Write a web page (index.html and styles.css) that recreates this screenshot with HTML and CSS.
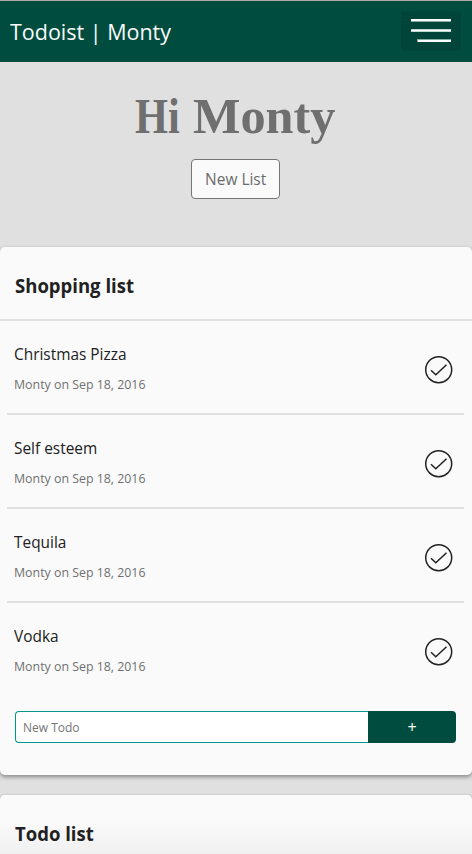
FILE: index.html
```html
<!DOCTYPE html>
<html lang="en">
<head>
<meta charset="utf-8">
<title>Todoist | Monty</title>
<link rel="stylesheet" href="styles.css">
</head>
<body>
<header class="navbar">
  <a class="brand"><span>Todoist | Monty</span></a>
  <button class="menu" aria-label="Menu">
    <svg width="60" height="40" viewBox="0 0 60 40"><path class="glow" d="M10 8h40v3H10zM10 18h40v3H10zM16 28h34v3H16z"/><path d="M10 8h40v2H10zM10 18.500h40v2H10zM17 29h33v2H17z"/></svg>
  </button>
</header>
<main>
  <section class="hero">
    <h1><span class="hi">Hi</span> <span class="user">Monty</span></h1>
    <button class="new-list"><span>New List</span></button>
  </section>
  <section class="card">
    <h2><span>Shopping list</span></h2>
    <ul>
      <li><div><p class="name"><span>Christmas Pizza</span></p><p class="meta"><span>Monty on Sep 18, 2016</span></p></div><svg class="check" viewBox="0 0 28 28"><circle cx="13.700" cy="13.700" r="13"/><path d="M6 14.200l4.800 4.500L21.500 8.700"/></svg></li>
      <li><div><p class="name"><span>Self esteem</span></p><p class="meta"><span>Monty on Sep 18, 2016</span></p></div><svg class="check" viewBox="0 0 28 28"><circle cx="13.700" cy="13.700" r="13"/><path d="M6 14.200l4.800 4.500L21.500 8.700"/></svg></li>
      <li><div><p class="name"><span>Tequila</span></p><p class="meta"><span>Monty on Sep 18, 2016</span></p></div><svg class="check" viewBox="0 0 28 28"><circle cx="13.700" cy="13.700" r="13"/><path d="M6 14.200l4.800 4.500L21.500 8.700"/></svg></li>
      <li><div><p class="name"><span>Vodka</span></p><p class="meta"><span>Monty on Sep 18, 2016</span></p></div><svg class="check" viewBox="0 0 28 28"><circle cx="13.700" cy="13.700" r="13"/><path d="M6 14.200l4.800 4.500L21.500 8.700"/></svg></li>
    </ul>
    <form class="add">
      <input type="text" placeholder="New Todo" aria-label="New Todo">
      <button type="button">+</button>
    </form>
  </section>
  <section class="card next">
    <h2><span>Todo list</span></h2>
  </section>
</main>
</body>
</html>
```
FILE: styles.css
```css
* { box-sizing: border-box; }
html, body { height: 854px; overflow: hidden; }
body { margin: 0; background: #e0e0e0; color: #212121; font-family: "Open Sans", "Noto Sans", sans-serif; }
h1, h2, p, ul { margin: 0; padding: 0; font-weight: normal; }
button, input { font-family: inherit; margin: 0; }
span { display: inline-block; white-space: nowrap; transform-origin: left center; }
.navbar { height: 62px; background: #004d40; border-top: 1px solid #aaa; display: flex; justify-content: space-between; align-items: flex-start; padding: 10px 11px 0 10px; }
.brand { color: #fafafa; font-size: 22px; line-height: 40px; }
.brand span { transform: scaleX(.977); }
.menu { width: 60px; height: 40px; border: 0; border-radius: 4px; padding: 0; background: #00443a; }
.menu svg { display: block; fill: #fff; }
.menu .glow { fill: #84aaa2; }
.hero { height: 185px; display: flex; flex-direction: column; align-items: center; }
.hero h1 { height: 97px; padding-top: 26px; color: #6f6f6f; font: bold 51px/56px "Liberation Serif", serif; }
.hi { transform: translateX(5px) scaleX(.83); }
.user { transform: translateX(-4px) scaleX(.985); }
.new-list { width: 89px; height: 40px; border: 1px solid #757575; border-radius: 4px; background: #fafafa; color: #6b6b6b; font-size: 16px; padding: 0; margin-right: 1px; }
.new-list span { transform-origin: center; transform: scaleX(.965); }
.card { height: 528px; background: #fafafa; border-radius: 5px; box-shadow: 0 2px 4px rgba(0,0,0,.4); }
.card h2 { height: 74px; border-bottom: 2px solid #e0e0e0; padding-left: 15px; font-size: 19px; font-weight: bold; line-height: 78px; }
.card h2 span { transform: scaleX(.975); }
ul { list-style: none; margin: 0 8px 0 7px; padding: 0; }
li { height: 94px; border-bottom: 2px solid #e0e0e0; padding: 20px 11px 0 7px; display: flex; justify-content: space-between; }
li:last-child { border-color: transparent; }
.name { font-size: 16px; line-height: 26px; }
.name span { transform: scaleX(.963); }
.meta { color: #707070; font-size: 12px; line-height: 20px; margin-top: 8px; }
.meta span { transform: scaleX(1.03); }
.check { width: 28px; height: 28px; margin-top: 15px; fill: none; stroke: #212121; stroke-width: 1.5; overflow: visible; }
.add { display: flex; height: 32px; margin: 14px 16px 0 15px; }
.add input { flex: 1; min-width: 0; border: 1px solid #009688; border-right: 0; border-radius: 4px 0 0 4px; padding: 0 7px; font-size: 12px; background: #fff; outline: 0; }
.add input::placeholder { color: #757575; opacity: 1; }
.add button { width: 88px; border: 0; border-radius: 0 4px 4px 0; background: #004d40; color: #fff; font-size: 16px; padding: 0; }
.next { height: 59px; margin-top: 20px; border-radius: 5px 5px 0 0; background: linear-gradient(#fafafa 45%, #f0f0f0); }
.next h2 { border: 0; }
```
